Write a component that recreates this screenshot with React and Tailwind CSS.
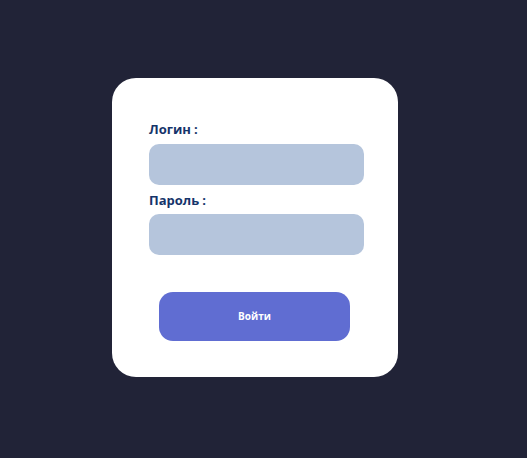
import React from "react";

const labelCls =
  "block text-[13px] leading-[16px] font-bold text-[#15346a] font-['Open_Sans',sans-serif]";
const inputCls = "block w-[215px] h-[41px] rounded-[10px] bg-[#b5c5dc] outline-none border-0";

export default function App() {
  return (
    <div className="min-h-[458px] bg-[#212337] pl-[112px] pt-[78px]">
      {/* login card */}
      <div className="w-[286px] h-[299px] rounded-[24px] bg-white pt-[43px] pl-[37px]">
        <form className="flex flex-col" onSubmit={(e) => e.preventDefault()}>
          <label className={labelCls + " mb-[7px]"}>
            Логин<span className="ml-[3px]">:</span>
          </label>
          <input className={inputCls} type="text" />
          <label className={labelCls + " mt-[7px] mb-[6px]"}>
            Пароль<span className="ml-[3px]">:</span>
          </label>
          <input className={inputCls} type="password" />
          <button
            type="submit"
            className="mt-[37px] ml-[10px] w-[191px] h-[49px] rounded-[14px] bg-[#606dd2] text-white text-[10px] font-bold font-['Open_Sans',sans-serif]"
          >
            Войти
          </button>
        </form>
      </div>
    </div>
  );
}
